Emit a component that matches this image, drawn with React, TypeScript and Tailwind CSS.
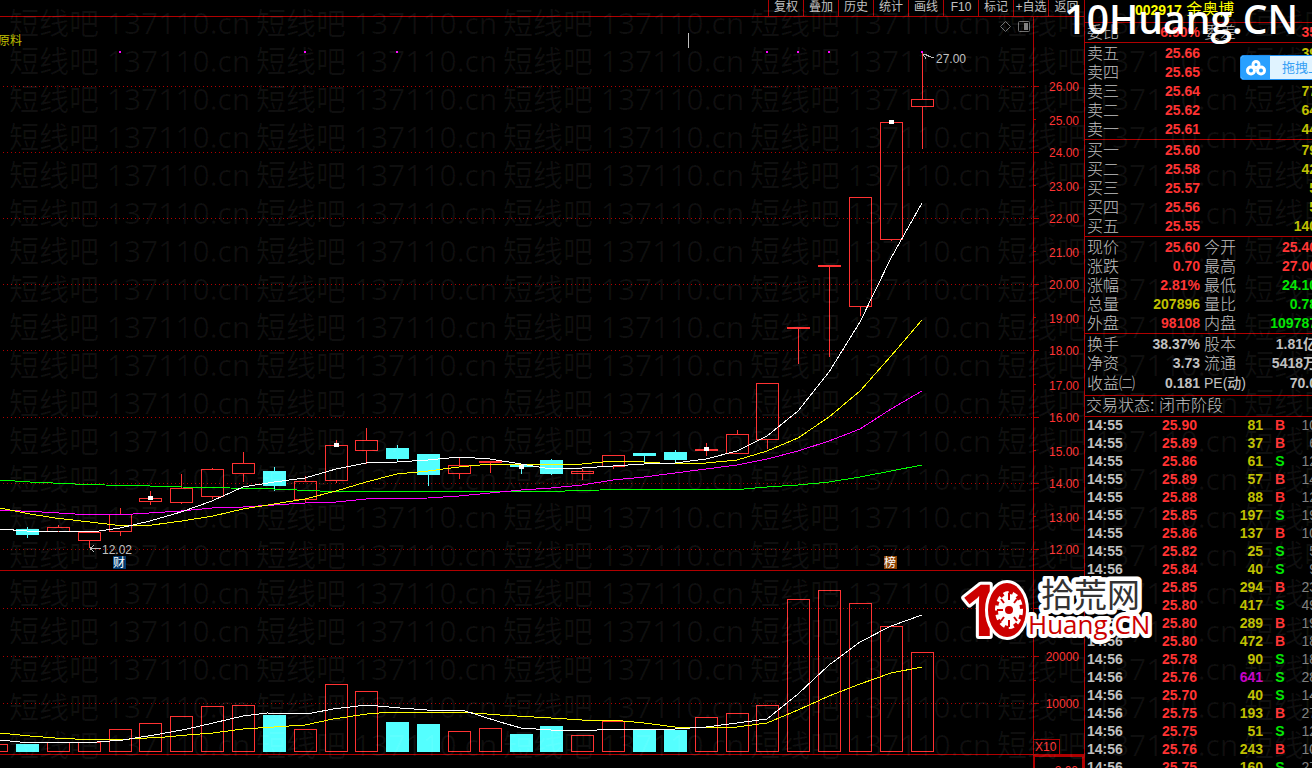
import type { ReactNode } from 'react'
import clsx from 'clsx'

type Candle = {
  x: number
  high: number
  top: number
  bottom: number
  low: number
  volume: number
  down?: boolean
  marked?: boolean
}

type Tick = [time: string, price: string, volume: number, side: 'B' | 'S', count: number]

type Quote = {
  label: string
  value: string
  color: string
  label2: ReactNode
  value2: string
  color2: string
}

const TOOLBAR = ['复权', '叠加', '历史', '统计', '画线', 'F10', '标记', '+自选']

// All chart values are screen rows of the two panes
const CANDLES: Candle[] = [
  { x: 27, high: 527, top: 529, bottom: 535, low: 538, volume: 744, down: true },
  { x: 58, high: 525, top: 527, bottom: 531, low: 531, volume: 742 },
  { x: 89, high: 532, top: 532, bottom: 540, low: 548, volume: 742 },
  { x: 120, high: 508, top: 514, bottom: 531, low: 536, volume: 729 },
  { x: 150, high: 491, top: 498, bottom: 501, low: 505, volume: 723, marked: true },
  { x: 181, high: 474, top: 488, bottom: 502, low: 504, volume: 716 },
  { x: 212, high: 468, top: 469, bottom: 496, low: 499, volume: 706 },
  { x: 243, high: 452, top: 463, bottom: 473, low: 482, volume: 705 },
  { x: 274, high: 467, top: 471, bottom: 486, low: 491, volume: 715, down: true },
  { x: 305, high: 476, top: 481, bottom: 499, low: 502, volume: 729 },
  { x: 336, high: 440, top: 445, bottom: 480, low: 483, volume: 684, marked: true },
  { x: 366, high: 428, top: 440, bottom: 450, low: 464, volume: 691 },
  { x: 397, high: 445, top: 448, bottom: 459, low: 461, volume: 722, down: true },
  { x: 428, high: 454, top: 454, bottom: 475, low: 486, volume: 724, down: true },
  { x: 459, high: 458, top: 465, bottom: 473, low: 479, volume: 731 },
  { x: 490, high: 461, top: 461, bottom: 462, low: 473, volume: 728 },
  { x: 521, high: 464, top: 464, bottom: 467, low: 474, volume: 734, down: true, marked: true },
  { x: 551, high: 459, top: 460, bottom: 474, low: 475, volume: 726, down: true },
  { x: 582, high: 469, top: 471, bottom: 473, low: 480, volume: 735 },
  { x: 613, high: 455, top: 455, bottom: 466, low: 469, volume: 721 },
  { x: 644, high: 453, top: 453, bottom: 456, low: 464, volume: 730, down: true },
  { x: 675, high: 450, top: 452, bottom: 460, low: 462, volume: 730, down: true },
  { x: 706, high: 443, top: 449, bottom: 450, low: 456, volume: 717, marked: true },
  { x: 737, high: 430, top: 434, bottom: 453, low: 453, volume: 713 },
  { x: 767, high: 383, top: 383, bottom: 439, low: 449, volume: 705 },
  { x: 798, high: 327, top: 327, bottom: 328, low: 364, volume: 599 },
  { x: 829, high: 265, top: 265, bottom: 266, low: 357, volume: 590 },
  { x: 860, high: 197, top: 197, bottom: 306, low: 316, volume: 603 },
  { x: 891, high: 122, top: 122, bottom: 239, low: 241, volume: 626, marked: true },
  { x: 922, high: 53, top: 99, bottom: 106, low: 149, volume: 652 },
]

const PRICE_LINES = [
  {
    color: '#00ff00',
    points:
      '0,480 30,482 75,484 105,485 150,486 182,487 230,488 274,489 320,491 397,491 565,491 600,490 630,489 744,489 767,487 798,485 829,482 860,477 891,471 922,465',
  },
  {
    color: '#ff00ff',
    points:
      '0,510 42,512 75,514 133,514 181,511 212,508 243,507 274,505 305,503 336,502 366,499 428,498 459,496 490,493 521,490 551,488 582,485 613,480 644,477 675,473 706,469 737,465 767,459 798,451 829,441 860,429 891,409 922,391',
  },
  {
    color: '#ffff00',
    points:
      '0,508 30,514 55,518 90,522 115,525 152,525 182,521 213,516 243,509 274,504 305,499 336,491 366,482 397,474 428,471 459,467 490,464 521,464 551,465 582,464 613,461 644,462 675,464 706,463 737,460 767,451 798,438 829,417 860,391 891,356 922,320',
  },
  {
    color: '#ffffff',
    points:
      '0,529 27,531 58,531 92,532 120,528 150,521 181,512 212,501 243,487 274,482 305,478 336,469 366,463 397,462 428,460 459,457 490,459 521,464 545,468 582,468 613,466 644,464 675,463 706,459 737,451 767,436 798,411 829,372 860,322 891,258 922,203',
  },
]

const VOLUME_LINES = [
  {
    color: '#ffff00',
    points:
      '0,733 30,736 55,738 75,739 130,739 165,737 187,735 213,733 243,729 274,727 305,725 333,719 367,714 392,712 460,712 500,715 551,718 582,720 613,720 644,723 675,727 706,728 737,727 767,723 798,710 829,696 860,684 891,673 922,667',
  },
  {
    color: '#ffffff',
    points:
      '0,740 20,742 97,742 123,740 160,734 187,729 213,723 243,716 267,713 307,714 333,709 367,705 400,708 427,710 462,710 500,722 521,728 551,730 582,731 613,729 675,729 706,727 737,723 767,719 798,694 829,665 860,642 891,626 922,615',
  },
]

const PRICE_AXIS = [
  { y: 86, label: '26.00' },
  { y: 119, label: '25.00' },
  { y: 152, label: '24.00' },
  { y: 185, label: '23.00' },
  { y: 218, label: '22.00' },
  { y: 251, label: '21.00' },
  { y: 284, label: '20.00' },
  { y: 317, label: '19.00' },
  { y: 350, label: '18.00' },
  { y: 384, label: '17.00' },
  { y: 417, label: '16.00' },
  { y: 450, label: '15.00' },
  { y: 483, label: '14.00' },
  { y: 516, label: '13.00' },
  { y: 549, label: '12.00' },
]

const LIMIT_UP_DOTS = [119, 304, 396, 766, 797, 828, 921]

const ASKS = [
  ['卖五', '25.66', '39'],
  ['卖四', '25.65', ''],
  ['卖三', '25.64', '77'],
  ['卖二', '25.62', '64'],
  ['卖一', '25.61', '44'],
]

const BIDS = [
  ['买一', '25.60', '79'],
  ['买二', '25.58', '42'],
  ['买三', '25.57', '5'],
  ['买四', '25.56', '5'],
  ['买五', '25.55', '140'],
]

const RED = 'text-[#ff3232]'
const GREEN = 'text-[#00e600]'
const YELLOW = 'text-[#c0c000]'
const SILVER = 'text-[#c0c0c0]'

const QUOTES: Quote[] = [
  { label: '现价', value: '25.60', color: RED, label2: '今开', value2: '25.40', color2: RED },
  { label: '涨跌', value: '0.70', color: RED, label2: '最高', value2: '27.00', color2: RED },
  { label: '涨幅', value: '2.81%', color: RED, label2: '最低', value2: '24.10', color2: GREEN },
  { label: '总量', value: '207896', color: YELLOW, label2: '量比', value2: '0.78', color2: GREEN },
  { label: '外盘', value: '98108', color: RED, label2: '内盘', value2: '109787', color2: GREEN },
]

const FUNDAMENTALS: Quote[] = [
  { label: '换手', value: '38.37%', color: SILVER, label2: '股本', value2: '1.81亿', color2: SILVER },
  { label: '净资', value: '3.73', color: SILVER, label2: '流通', value2: '5418万', color2: SILVER },
  {
    label: '收益㈡',
    value: '0.181',
    color: SILVER,
    label2: <span className="text-sm font-medium">PE(动)</span>,
    value2: '70.0',
    color2: SILVER,
  },
]

const TICKS: Tick[] = [
  ['14:55', '25.90', 81, 'B', 10],
  ['14:55', '25.89', 37, 'B', 6],
  ['14:55', '25.86', 61, 'S', 12],
  ['14:55', '25.89', 57, 'B', 14],
  ['14:55', '25.88', 88, 'B', 12],
  ['14:55', '25.85', 197, 'S', 19],
  ['14:55', '25.86', 137, 'B', 10],
  ['14:55', '25.82', 25, 'S', 5],
  ['14:56', '25.84', 40, 'S', 9],
  ['14:56', '25.85', 294, 'B', 23],
  ['14:56', '25.80', 417, 'S', 49],
  ['14:56', '25.80', 289, 'B', 19],
  ['14:56', '25.80', 472, 'B', 18],
  ['14:56', '25.78', 90, 'S', 18],
  ['14:56', '25.76', 641, 'S', 28],
  ['14:56', '25.70', 40, 'S', 14],
  ['14:56', '25.75', 193, 'B', 27],
  ['14:56', '25.75', 51, 'S', 12],
  ['14:56', '25.76', 243, 'B', 10],
  ['14:56', '25.75', 160, 'S', 27],
]

function Toolbar() {
  return (
    <nav className="flex h-[17px] shrink-0 justify-end overflow-hidden border-b border-[#b00000] text-xs leading-[14px] text-[#c0c0c0]">
      {TOOLBAR.map((name) => (
        <button key={name} className="h-4 w-[35px] border-l border-[#b00000] pb-[3px] whitespace-nowrap">
          {name}
        </button>
      ))}
      <button className="h-4 w-9 border-l border-[#b00000] pb-[3px]">返回</button>
    </nav>
  )
}

function GridLine({ y }: { y: number }) {
  return (
    <>
      <line x1="3" x2="1033" y1={y + 0.5} y2={y + 0.5} stroke="#b00000" strokeDasharray="1 3" />
      <rect x="1034" y={y} width="5" height="1" fill="#b00000" />
    </>
  )
}

function PricePane() {
  return (
    <svg viewBox="0 17 1084 553" className="block w-full" role="img" aria-label="K线图">
      <g shapeRendering="crispEdges">
        {PRICE_AXIS.map(({ y }, i) =>
          i % 2 === 0 ? <GridLine key={y} y={y} /> : <rect key={y} x="1034" y={y} width="2" height="1" fill="#b00000" />
        )}
        <rect x="1033" y="17" width="1" height="553" fill="#b00000" />
        <rect x="688" y="33" width="1" height="15" fill="#c0c0c0" />
        <rect x="0" y="529" width="7" height="1" fill="#ff3232" />

        {CANDLES.map((c) => (
          <g key={c.x} fill={c.down ? '#54ffff' : '#ff3232'}>
            <rect x={c.x} y={c.high} width="1" height={c.top - c.high} />
            <rect x={c.x} y={c.bottom} width="1" height={c.low - c.bottom} />
            {c.down ? (
              <rect x={c.x - 11} y={c.top} width="23" height={c.bottom - c.top} />
            ) : (
              <rect
                x={c.x - 10.5}
                y={c.top + 0.5}
                width="22"
                height={c.bottom - c.top}
                fill="none"
                stroke="#ff3232"
              />
            )}
          </g>
        ))}

        {PRICE_LINES.map((line) => (
          <polyline key={line.color} points={line.points} fill="none" stroke={line.color} />
        ))}

        {CANDLES.filter((c) => c.marked).map((c) => (
          <rect key={c.x} x={c.x - 2} y={c.x === 521 ? 465 : c.top - 2} width="5" height="4" fill="#fff" />
        ))}
        {LIMIT_UP_DOTS.map((x) => (
          <rect key={x} x={x} y="51" width="2" height="2" fill="#ff00ff" />
        ))}

        {/* High / low pointers */}
        <path d="M923 54 L934 58 M923 54 h4 M923 54 l3 5" fill="none" stroke="#c0c0c0" />
        <path d="M90 548.5 h11 M90 548.5 l4 -3 M90 548.5 l4 3" fill="none" stroke="#c0c0c0" />

        <rect x="113" y="556" width="13" height="13" fill="#003a70" />
        <rect x="884" y="556" width="13" height="13" fill="#8a4000" />
      </g>

      <path d="M1005.5 21.5 l5 5 l-5 5 l-5 -5 z" fill="none" stroke="#707070" />
      <rect x="1018.5" y="21.5" width="11" height="10" rx="1" fill="none" stroke="#707070" />
      <rect x="1024" y="23" width="4" height="7" fill="#808080" />

      <g fontSize="12" fill="#c0c0c0">
        <text x="936" y="63">27.00</text>
        <text x="102" y="554">12.02</text>
        <text x="-2" y="45" fill="#c0c000">
          原料
        </text>
        <text x="113" y="567" fill="#fff">
          财
        </text>
        <text x="884" y="567" fill="#fff">
          榜
        </text>
      </g>
      <g fontSize="12" fill="#ff3232" textAnchor="end">
        {PRICE_AXIS.map(({ y, label }, i) => (
          <text key={label} x="1079" y={i % 2 === 0 ? y + 5 : y + 6}>
            {label}
          </text>
        ))}
      </g>
    </svg>
  )
}

function VolumePane() {
  return (
    <svg viewBox="0 571 1084 183" className="block w-full" role="img" aria-label="成交量">
      <g shapeRendering="crispEdges">
        <GridLine y={608} />
        <GridLine y={656} />
        <GridLine y={703} />
        <rect x="1034" y="680" width="2" height="1" fill="#b00000" />
        <rect x="1033" y="571" width="1" height="183" fill="#b00000" />
        <path d="M0 744.5 H7.5 V751.5 H0" fill="none" stroke="#ff3232" />

        {CANDLES.map((c) =>
          c.down ? (
            <rect key={c.x} x={c.x - 11} y={c.volume} width="23" height={752 - c.volume} fill="#54ffff" />
          ) : (
            <rect
              key={c.x}
              x={c.x - 10.5}
              y={c.volume + 0.5}
              width="22"
              height={751 - c.volume}
              fill="none"
              stroke="#ff3232"
            />
          )
        )}
        {VOLUME_LINES.map((line) => (
          <polyline key={line.color} points={line.points} fill="none" stroke={line.color} />
        ))}
        <path d="M1034 739.5 H1059.5 V754" fill="none" stroke="#b00000" />
      </g>
      <g fontSize="12" fill="#ff3232">
        <text x="1079" y="661" textAnchor="end">
          20000
        </text>
        <text x="1079" y="708" textAnchor="end">
          10000
        </text>
        <text x="1035" y="751">X10</text>
      </g>
    </svg>
  )
}

function OrderTable({ rows }: { rows: string[][] }) {
  return (
    <div className="border-b border-[#b00000] pt-px pl-0.5">
      <table className="w-[230px] table-fixed">
        <tbody>
          {rows.map(([label, price, volume]) => (
            <tr key={label} className="h-[19px]">
              <th className="w-[50px] p-0 text-left text-base leading-[19px] font-light text-[#c0c0c0]">{label}</th>
              <td className="w-[63px] p-0 text-right leading-[19px] font-bold text-[#ff3232]">{price}</td>
              <td className="p-0 text-right leading-[19px] font-bold text-[#c0c000]">{volume}</td>
            </tr>
          ))}
        </tbody>
      </table>
    </div>
  )
}

function QuoteTable({ rows, className }: { rows: Quote[]; className?: string }) {
  return (
    <div className={clsx('border-b border-[#b00000] pl-0.5', className)}>
      <table className="w-[230px] table-fixed">
        <tbody>
          {rows.map((row) => (
            <tr key={row.label} className="h-[19px] leading-[19px] whitespace-nowrap">
              <th className="w-[50px] p-0 text-left text-base leading-[19px] font-light text-[#c0c0c0]">{row.label}</th>
              <td className={clsx('w-[63px] p-0 text-right font-bold', row.color)}>{row.value}</td>
              <th className="w-11 p-0 pl-1 text-left text-base leading-[19px] font-light text-[#c0c0c0]">
                {row.label2}
              </th>
              <td className={clsx('p-0 text-right font-bold', row.color2)}>{row.value2}</td>
            </tr>
          ))}
        </tbody>
      </table>
    </div>
  )
}

function TickTable() {
  return (
    <table className="-mt-px ml-0.5 w-[230px] table-fixed">
      <tbody>
        {TICKS.map(([time, price, volume, side, count], i) => (
          <tr key={i} className="h-[18px] leading-[18px] font-bold">
            <td className="w-[50px] p-0 text-[#c0c0c0]">{time}</td>
            <td className="w-[60px] p-0 text-right text-[#ff3232]">{price}</td>
            <td className={clsx('w-[66px] p-0 text-right', volume > 500 ? 'text-[#c800c8]' : YELLOW)}>{volume}</td>
            <td className={clsx('w-[34px] p-0 text-center', side === 'B' ? RED : GREEN)}>{side}</td>
            <td className="p-0 text-right font-normal text-[#808080]">{count}</td>
          </tr>
        ))}
      </tbody>
    </table>
  )
}

function Sidebar() {
  return (
    <aside className="w-[228px] shrink-0 overflow-hidden border-l border-[#b00000] text-sm">
      <h1 className="h-[23px] border-b border-[#b00000] pl-[50px] text-base leading-[18px] whitespace-nowrap text-[#ffff00]">
        <span className="text-sm font-bold">002917</span> 金奥博
      </h1>
      <QuoteTable
        className="h-5"
        rows={[{ label: '委比', value: '6.90%', color: RED, label2: '委差', value2: '35', color2: RED }]}
      />
      <OrderTable rows={ASKS} />
      <OrderTable rows={BIDS} />
      <QuoteTable rows={QUOTES} className="pt-px" />
      <QuoteTable rows={FUNDAMENTALS} className="pt-px pb-0.5" />
      <p className="h-[21px] border-b border-[#b00000] pl-px text-base leading-5 font-light text-[#c0c0c0]">
        交易状态: 闭市阶段
      </p>
      <TickTable />
    </aside>
  )
}

function Watermark() {
  return (
    <div
      aria-hidden="true"
      className="pointer-events-none absolute inset-0 overflow-hidden pt-1 font-['Open_Sans','Noto_Sans_CJK_SC',sans-serif] text-[30px] leading-[38px] text-white/6"
    >
      {Array.from({ length: 20 }, (_, row) => (
        <div key={row} className="flex h-[38px] pl-[9px] whitespace-nowrap">
          {Array.from({ length: 6 }, (_, col) => (
            <span key={col} className="w-[247px] shrink-0">
              短线吧 137110.cn
            </span>
          ))}
        </div>
      ))}
    </div>
  )
}

function UploadButton() {
  return (
    <button className="absolute top-[55px] right-0 flex h-[25px] w-[72px] items-stretch overflow-hidden rounded-l border border-r-0 border-[#1e8ef0] bg-[#e0f3ff] text-[13px] text-[#35a0f5]">
      <span className="flex w-[29px] shrink-0 items-center justify-center bg-[#28a0ff]">
        <svg width="20" height="16" viewBox="0 0 20 16" fill="none" stroke="#fff" strokeWidth="3">
          <circle cx="10" cy="4.5" r="3" />
          <circle cx="5" cy="10.5" r="3.5" />
          <circle cx="15" cy="10.5" r="3.5" />
        </svg>
      </span>
      <span className="pl-3 leading-[24px] whitespace-nowrap">拖拽上传</span>
    </button>
  )
}

function SiteLogo() {
  return (
    <svg
      viewBox="0 0 192 68"
      className="absolute top-[576px] right-[159px] h-[68px] w-[192px]"
      role="img"
      aria-label="拾荒网 10Huang.CN"
    >
      <g stroke="#fff" strokeLinejoin="round" paintOrder="stroke" className="font-['Open_Sans','Noto_Sans_CJK_SC',sans-serif]">
        <text x="-1" y="60" fontSize="72" fontWeight="700" fill="#cc0000" strokeWidth="6">
          1
        </text>
        <ellipse cx="46" cy="34" rx="19" ry="27" fill="#cc0000" strokeWidth="6" />
        <text x="80" y="31" fontSize="33" fill="#333" strokeWidth="9">
          拾荒网
        </text>
        <text x="67" y="58" fontSize="26" fontWeight="500" fill="#cc0000" strokeWidth="8">
          Huang.CN
        </text>
      </g>
      {/* Gear inside the zero */}
      <ellipse cx="48" cy="34" rx="11" ry="16" fill="#fff" />
      <ellipse cx="48" cy="34" rx="12" ry="17" fill="none" stroke="#fff" strokeWidth="4" strokeDasharray="5 4" />
      <path
        d="M48 17 V24 M48 44 V51 M36 34 H42 M40 23 l3 4 M56 23 l-3 4 M40 45 l3 -4 M56 45 l-3 -4"
        stroke="#cc0000"
        strokeWidth="2"
      />
      <circle cx="48" cy="34" r="4" fill="#cc0000" />
    </svg>
  )
}

export default function App() {
  return (
    <div className="relative flex h-screen overflow-hidden bg-black font-['Liberation_Sans','Noto_Sans_CJK_SC',sans-serif]">
      <main className="flex min-w-0 flex-1 flex-col">
        <Toolbar />
        <div className="border-b border-[#b00000]">
          <PricePane />
        </div>
        <div className="border-b border-[#b00000]">
          <VolumePane />
        </div>
        <div className="flex flex-1 justify-end">
          <div className="h-10 w-[51px] border-2 border-[#b00000] pt-2 pr-1 text-right text-xs leading-3 text-[#ff3232]">
            2.00
          </div>
        </div>
      </main>
      <Sidebar />

      <Watermark />
      <UploadButton />
      <SiteLogo />
      <div className="pointer-events-none absolute -top-px right-[14px] font-['Open_Sans',sans-serif] text-[39px] leading-10 font-semibold text-white">
        10Huang.CN
      </div>
    </div>
  )
}
